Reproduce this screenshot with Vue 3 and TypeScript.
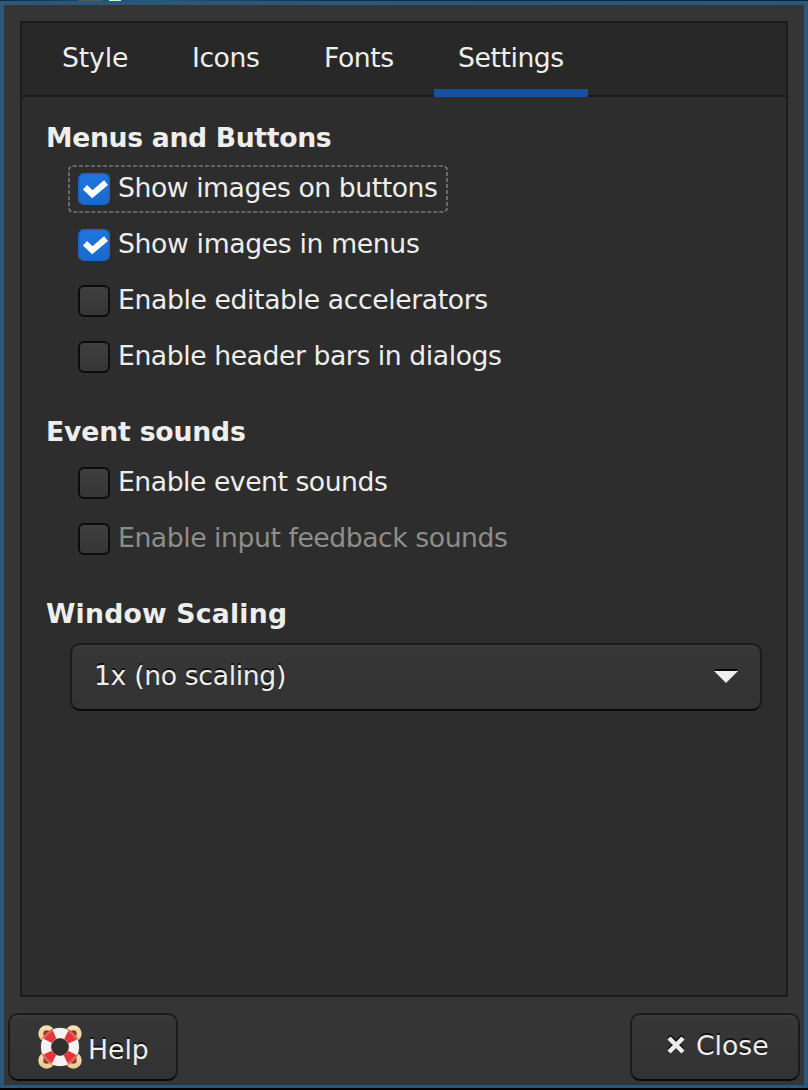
<script setup lang="ts">
import { ref } from 'vue'

interface Option {
  label: string
  tracking: number
  checked: boolean
  focused?: boolean
  disabled?: boolean
}
interface Section {
  title: string
  tracking: number
  options: Option[]
}

const tabs = ['Style', 'Icons', 'Fonts', 'Settings']
const active = ref('Settings')

// tracking: letter spacing in pixels, tuned per string
const sections = ref<Section[]>([
  {
    title: 'Menus and Buttons',
    tracking: -0.33,
    options: [
      { label: 'Show images on buttons', tracking: -0.45, checked: true, focused: true },
      { label: 'Show images in menus', tracking: -0.36, checked: true },
      { label: 'Enable editable accelerators', tracking: -0.39, checked: false },
      { label: 'Enable header bars in dialogs', tracking: -0.44, checked: false },
    ],
  },
  {
    title: 'Event sounds',
    tracking: -0.17,
    options: [
      { label: 'Enable event sounds', tracking: -0.48, checked: false },
      { label: 'Enable input feedback sounds', tracking: -0.45, checked: false, disabled: true },
    ],
  },
])

function toggle(option: Option) {
  if (!option.disabled) option.checked = !option.checked
}
</script>

<template>
  <div class="desktop">
    <div class="wallpaper"><i class="dim"></i><i class="lit"></i></div>
    <main class="window">
      <section class="notebook">
        <nav class="tabs">
          <div
            v-for="tab in tabs"
            :key="tab"
            class="tab"
            :class="[tab.toLowerCase(), { active: tab === active }]"
            @click="active = tab"
          >
            {{ tab }}
          </div>
        </nav>
        <div class="page">
          <div v-for="section in sections" :key="section.title" class="section">
            <h2 :style="{ letterSpacing: section.tracking + 'px' }">{{ section.title }}</h2>
            <div
              v-for="option in section.options"
              :key="option.label"
              class="option"
              :class="{ disabled: option.disabled }"
              @click="toggle(option)"
            >
              <svg v-if="option.focused" class="focus" width="380" height="48" viewBox="0 0 380 48">
                <rect x="1" y="1" width="378" height="46" rx="4" />
              </svg>
              <span class="check" :class="{ on: option.checked }">
                <svg v-if="option.checked" width="32" height="32" viewBox="0 0 32 32">
                  <path d="M7 14.3 14.3 21.2 28 9.6" />
                </svg>
              </span>
              <span class="label" :style="{ letterSpacing: option.tracking + 'px' }">{{ option.label }}</span>
            </div>
          </div>
          <div class="section">
            <h2 class="scaling">Window Scaling</h2>
            <div class="combo">
              <span>1x (no scaling)</span>
              <svg width="26" height="16" viewBox="0 0 26 16">
                <path d="M1 1H25L13 13Z" fill="#080808" />
                <path d="M1 3H25L13 15Z" fill="#eeeeec" />
              </svg>
            </div>
          </div>
        </div>
      </section>
      <footer>
        <button class="help">
          <svg width="46" height="46" viewBox="0 0 46 46">
            <defs>
              <linearGradient id="rope" x1="0" y1="0" x2="0" y2="1">
                <stop offset="0" stop-color="#f7dfb4" />
                <stop offset="1" stop-color="#edcb91" />
              </linearGradient>
            </defs>
            <g fill="#8a3a30" stroke="url(#rope)" stroke-width="5">
              <circle cx="9.6" cy="9.6" r="5.8" />
              <circle cx="36.4" cy="9.6" r="5.8" />
              <circle cx="9.6" cy="36.4" r="5.8" />
              <circle cx="36.4" cy="36.4" r="5.8" />
            </g>
            <circle cx="23" cy="23" r="14" fill="#303030" stroke="#7d4a47" stroke-width="11" />
            <circle cx="23" cy="23" r="14" fill="none" stroke="#f3f3f1" stroke-width="10" />
            <circle
              cx="23" cy="23" r="14" fill="none" stroke="#e6353a" stroke-width="10"
              stroke-dasharray="9.6 12.391" stroke-dashoffset="-6.195"
            />
            <circle cx="23" cy="23" r="18" fill="none" stroke="#ffffff" stroke-opacity=".2" stroke-width="2" />
          </svg>
          <span>Help</span>
        </button>
        <button class="close">
          <svg width="20" height="22" viewBox="0 0 20 22">
            <path d="M3 1 17 15M17 1 3 15" stroke="#101010" />
            <path d="M3 3 17 17M17 3 3 17" stroke="#eeeeec" />
          </svg>
          <span>Close</span>
        </button>
      </footer>
    </main>
  </div>
</template>

<style>
body {
  margin: 0;
  background: #000;
}
</style>

<style scoped>
* {
  box-sizing: border-box;
}
.desktop {
  width: 808px;
  height: 1090px;
  overflow: hidden;
  background: #000;
  color: #eeeeec;
  font: 26.667px/32px 'DejaVu Sans', sans-serif;
  white-space: nowrap;
}
.wallpaper {
  display: flex;
  height: 1px;
  padding-left: 78px;
  gap: 7px;
  background: linear-gradient(90deg, #0a2c43, #245a80 18%, #102f45 40%, #0b2233);
}
.wallpaper i {
  height: 1px;
}
.dim {
  width: 24px;
  background: #4c5c60;
}
.lit {
  width: 12px;
  background: #c9f5ef;
}
.window {
  display: flex;
  flex-direction: column;
  height: 1087px;
  border: 4px solid #29587c;
  border-bottom-width: 3px;
  background: #353535;
}
.notebook {
  height: 976px;
  margin: 16px 16px 0;
  border: 2px solid #1c1c1c;
  background: #2d2d2d;
}
.tabs {
  display: flex;
  gap: 16px;
  height: 74px;
  padding-left: 16px;
  border-bottom: 2px solid #1c1c1c;
  background: #282828;
}
.tab {
  height: 74px;
  padding: 19px 0 0 24px;
  letter-spacing: -0.45px;
}
.tab.style {
  width: 114px;
  letter-spacing: -0.15px;
}
.tab.icons {
  width: 116px;
}
.tab.fonts {
  width: 118px;
}
.tab.settings {
  width: 154px;
}
.tab.active {
  border-bottom: 8px solid #15539e;
}
.page {
  padding: 25px 24px 0;
}
.section {
  margin-bottom: 35px;
}
h2 {
  margin: 0 0 11px;
  font: inherit;
  font-weight: bold;
}
h2.scaling {
  margin-bottom: 13px;
  letter-spacing: 0.22px;
}
.option {
  position: relative;
  display: flex;
  align-items: center;
  gap: 8px;
  height: 48px;
  margin: 0 0 8px 22px;
  padding-left: 10px;
}
.option:last-child {
  margin-bottom: 0;
}
.focus {
  position: absolute;
  left: 0;
  top: 0;
  fill: none;
  stroke: #777;
  stroke-width: 1.7;
  stroke-dasharray: 4 2;
}
.check {
  width: 32px;
  height: 32px;
  border: 2px solid #0c0c0c;
  border-radius: 6px;
  background: linear-gradient(#3f3f3f, #363636);
}
.check.on {
  border-color: #1b66c6;
  background: linear-gradient(#1f76e2, #1b6acb);
}
.check svg {
  display: block;
  margin: -2px;
  fill: none;
  stroke: #fff;
  stroke-width: 6;
}
.label {
  margin-top: -2px;
}
.disabled {
  color: #8d8d8c;
}
.combo,
button {
  display: flex;
  align-items: center;
  border: 2px solid #1b1b1b;
  border-bottom-color: #090909;
  border-radius: 10px;
  background: linear-gradient(#373737, #323232);
  box-shadow: inset 0 2px #3b3b3b;
  text-shadow: 0 -2px #121212;
}
.combo {
  justify-content: space-between;
  width: 692px;
  height: 68px;
  margin-left: 24px;
  padding: 0 21px 2px 22px;
  letter-spacing: -0.35px;
}
footer {
  display: flex;
  justify-content: space-between;
  padding: 16px 4px 0;
}
button {
  height: 68px;
  margin: 0;
  padding: 0;
  color: inherit;
  font: inherit;
}
.help {
  width: 170px;
  padding-left: 27px;
  gap: 5px;
}
.help span {
  margin-top: 6px;
}
.close {
  width: 170px;
  padding-left: 34px;
  gap: 10px;
}
.close span {
  margin-top: -2px;
}
.close svg {
  margin-top: -2px;
  fill: none;
  stroke-width: 4.4;
}
</style>
